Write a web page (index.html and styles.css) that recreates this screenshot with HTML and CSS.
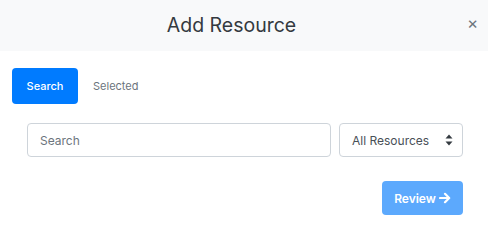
FILE: index.html
```html
<!DOCTYPE html>
<html>
<head>
<meta charset="utf-8">
<link rel="stylesheet" href="styles.css">
</head>
<body>
<div class="modal">
  <div class="header">
    <h5 class="title">Add Resource</h5>
    <button class="close">×</button>
  </div>
  <div class="body">
    <div class="tabs">
      <button class="tab active">Search</button>
      <button class="tab">Selected</button>
    </div>
    <div class="filters">
      <input class="search" type="text" placeholder="Search">
      <div class="select">
        <span>All Resources</span>
        <svg width="8" height="12" viewBox="0 0 8 12"><path d="M4 0.5 L7.5 4.5 H0.5 Z M4 11.5 L7.5 7.5 H0.5 Z" fill="#343a40"/></svg>
      </div>
    </div>
    <div class="actions">
      <button class="review">Review
        <svg width="12" height="12" viewBox="0 0 12 12"><path d="M1 6 H10 M6 1.8 L10.2 6 L6 10.2" stroke="#fff" stroke-width="2.2" fill="none" stroke-linecap="round" stroke-linejoin="round"/></svg>
      </button>
    </div>
  </div>
</div>
</body>
</html>
```
FILE: styles.css
```css
* { box-sizing: border-box; }
html, body { margin: 0; padding: 0; background: #fff; }
body { font-family: Inter, "Noto Sans", sans-serif; color: #343a40; width: 488px; height: 251px; overflow: hidden; }
.header {
  height: 51px;
  background: #f8f9fa;
  display: flex;
  align-items: center;
  padding: 0 8px 0 0;
}
.title {
  flex: 1;
  margin: 0;
  text-align: center;
  font-size: 19.5px;
  font-weight: 400;
  color: #343a40;
  padding-right: 2px;
  padding-bottom: 2px;
}
.close {
  border: 0;
  background: none;
  color: #6c757d;
  font-size: 17px;
  font-family: Inter, sans-serif;
  padding: 0 0 5px 0;
  width: 15px;
  cursor: pointer;
}
.body { padding: 17px 12px 0 12px; }
.tabs { display: flex; align-items: center; gap: 0; }
.tab {
  border: 0;
  background: none;
  font-family: Inter, sans-serif;
  font-size: 11px;
  color: #6c757d;
  padding: 0 15px;
  height: 36px;
  border-radius: 4px;
}
.tab.active { background: #007bff; color: #fff; width: 66px; padding: 0; font-weight: 500; }
.filters { display: flex; gap: 8px; padding: 19px 13px 0 15px; }
.search {
  width: 304px;
  height: 34px;
  border: 1px solid #ced4da;
  border-radius: 4px;
  padding: 0 12px;
  font-family: Inter, sans-serif;
  font-size: 12px;
  color: #495057;
}
.search::placeholder { color: #6c757d; }
.select {
  width: 124px;
  height: 34px;
  border: 1px solid #ced4da;
  border-radius: 4px;
  display: flex;
  align-items: center;
  justify-content: space-between;
  padding: 0 9px 0 12px;
  font-size: 12px;
  color: #495057;
}
.actions { display: flex; justify-content: flex-end; padding: 24px 13px 0 0; }
.review {
  width: 81px;
  height: 34px;
  border: 0;
  border-radius: 4px;
  background: #5ca9fd;
  color: #fff;
  font-family: Inter, sans-serif;
  font-size: 12px;
  font-weight: 600;
  display: flex;
  align-items: center;
  justify-content: center;
  gap: 3px;
}
```
